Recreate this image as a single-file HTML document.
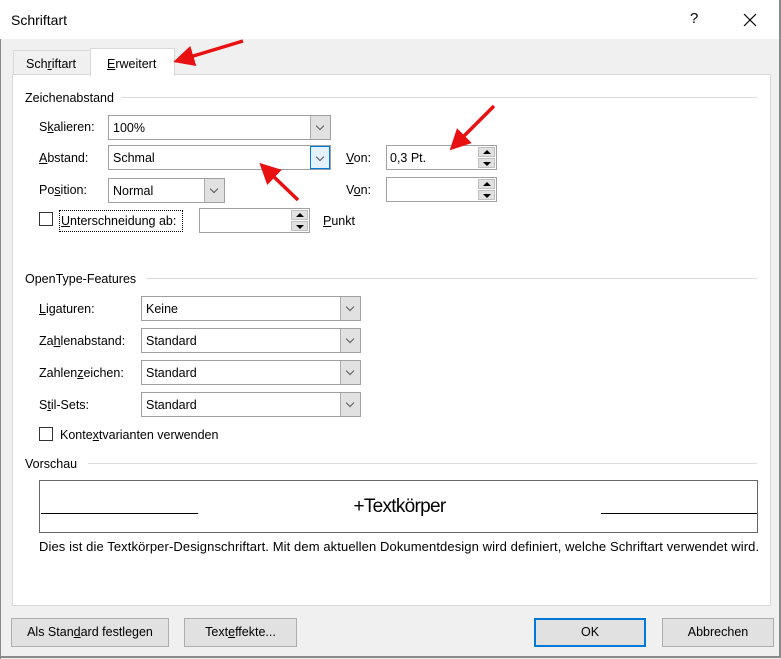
<!DOCTYPE html>
<html><head><meta charset="utf-8"><style>
*{box-sizing:border-box;margin:0;padding:0}
body{width:781px;height:658px;position:relative;background:#f0f0f0;font-family:"Liberation Sans",sans-serif;font-size:12.5px;color:#000;overflow:hidden}
.a{position:absolute}
.t{position:absolute;white-space:nowrap;line-height:14px}
.combo{position:absolute;background:#fff;border:1px solid #a0a0a0;height:25px}
.combo span{position:absolute;left:4px;top:5px}
.arr{position:absolute;right:0;top:0;bottom:0;width:20px;background:#e1e1e1;border-left:1px solid #adadad}
.arr:after{content:"";position:absolute;left:6px;top:7px;width:5px;height:5px;border-right:1px solid #555;border-bottom:1px solid #555;transform:rotate(45deg)}
.spin{position:absolute;background:#fff;border:1px solid #a0a0a0;height:25px}
.spin span{position:absolute;left:3px;top:5px}
.sb{position:absolute;right:1px;width:17px;height:10px;background:#e1e1e1;border:1px solid #c0c0c0}
.up{top:1px}.dn{bottom:1px}
.up:after{content:"";position:absolute;left:4px;top:2px;border:4px solid transparent;border-bottom:4px solid #000;border-top:0}
.dn:after{content:"";position:absolute;left:4px;top:3px;border:4px solid transparent;border-top:4px solid #000;border-bottom:0}
.cb{position:absolute;width:14px;height:14px;border:1px solid #333;background:#fff}
.line{position:absolute;height:1px;background:#dcdcdc}
.btn{position:absolute;top:618px;height:29px;background:#e1e1e1;border:1px solid #adadad;text-align:center;line-height:27px}
u{text-decoration:underline}
</style></head><body>
<div class="a" style="left:0;top:0;width:781px;height:39px;background:#fff"></div>
<div class="t" style="left:11px;top:13px;font-size:14px">Schriftart</div>
<div class="t" style="left:690px;top:12px;font-size:15px">?</div>
<svg class="a" style="left:743px;top:13px" width="14" height="14"><path d="M1 1L13 13M13 1L1 13" stroke="#000" stroke-width="1.2"/></svg>
<div class="a" style="right:0;top:0;width:2px;height:658px;background:#8a8a8a"></div>
<div class="a" style="left:0;bottom:0;width:781px;height:2px;background:#8a8a8a"></div>
<div class="a" style="left:0;top:39px;width:1px;height:620px;background:#8a8a8a"></div>
<!-- tabs -->
<div class="a" style="left:13px;top:50px;width:78px;height:25px;border:1px solid #d9d9d9;border-bottom:none;background:#f0f0f0"></div>
<div class="t" style="left:26px;top:57px">Sch<u>r</u>iftart</div>
<div class="a" style="left:12px;top:74px;width:759px;height:532px;background:#fff;border:1px solid #d9d9d9"></div>
<div class="a" style="left:90px;top:48px;width:85px;height:28px;background:#fff;border:1px solid #d9d9d9;border-bottom:none"></div>
<div class="t" style="left:107px;top:57px"><u>E</u>rweitert</div>
<!-- Zeichenabstand -->
<div class="t" style="left:25px;top:91px">Zeichenabstand</div>
<div class="line" style="left:121px;top:97px;width:636px"></div>
<div class="t" style="left:39px;top:120px">S<u>k</u>alieren:</div>
<div class="combo" style="left:108px;top:115px;width:223px"><span>100%</span><div class="arr"></div></div>
<div class="t" style="left:39px;top:151px"><u>A</u>bstand:</div>
<div class="combo" style="left:108px;top:145px;width:223px"><span>Schmal</span><div class="arr" style="background:#e5f1fb;border:1px solid #0078d7"></div></div>
<div class="t" style="left:346px;top:151px"><u>V</u>on:</div>
<div class="spin" style="left:386px;top:145px;width:111px"><span>0,3 Pt.</span><div class="sb up"></div><div class="sb dn"></div></div>
<div class="t" style="left:39px;top:183px">Po<u>s</u>ition:</div>
<div class="combo" style="left:108px;top:178px;width:117px"><span>Normal</span><div class="arr"></div></div>
<div class="t" style="left:346px;top:183px">V<u>o</u>n:</div>
<div class="spin" style="left:386px;top:177px;width:111px"><div class="sb up"></div><div class="sb dn"></div></div>
<div class="cb" style="left:39px;top:212px"></div>
<div class="a" style="left:59px;top:210px;width:124px;height:22px;border:1px dotted #000"></div>
<div class="t" style="left:61px;top:214px"><u>U</u>nterschneidung ab:</div>
<div class="spin" style="left:199px;top:208px;width:111px"><div class="sb up"></div><div class="sb dn"></div></div>
<div class="t" style="left:323px;top:214px"><u>P</u>unkt</div>
<!-- OpenType -->
<div class="t" style="left:25px;top:272px">OpenType-Features</div>
<div class="line" style="left:146px;top:278px;width:611px"></div>
<div class="t" style="left:39px;top:302px"><u>L</u>igaturen:</div>
<div class="combo" style="left:141px;top:296px;width:220px"><span>Keine</span><div class="arr"></div></div>
<div class="t" style="left:39px;top:334px">Za<u>h</u>lenabstand:</div>
<div class="combo" style="left:141px;top:328px;width:220px"><span>Standard</span><div class="arr"></div></div>
<div class="t" style="left:39px;top:366px">Zahlen<u>z</u>eichen:</div>
<div class="combo" style="left:141px;top:360px;width:220px"><span>Standard</span><div class="arr"></div></div>
<div class="t" style="left:39px;top:398px">S<u>t</u>il-Sets:</div>
<div class="combo" style="left:141px;top:392px;width:220px"><span>Standard</span><div class="arr"></div></div>
<div class="cb" style="left:39px;top:427px"></div>
<div class="t" style="left:60px;top:428px">Konte<u>x</u>tvarianten verwenden</div>
<!-- Vorschau -->
<div class="t" style="left:25px;top:457px">Vorschau</div>
<div class="line" style="left:88px;top:463px;width:669px"></div>
<div class="a" style="left:39px;top:480px;width:719px;height:53px;border:1px solid #666"></div>
<div class="a" style="left:41px;top:513px;width:157px;height:1px;background:#000"></div>
<div class="a" style="left:601px;top:513px;width:156px;height:1px;background:#000"></div>
<div class="t" style="left:0;width:799px;text-align:center;top:497px;font-size:19px;line-height:20px;letter-spacing:-0.7px">+Textkörper</div>
<div class="t" style="left:39px;top:540px;font-size:13px;letter-spacing:0.1px">Dies ist die Textkörper-Designschriftart. Mit dem aktuellen Dokumentdesign wird definiert, welche Schriftart verwendet wird.</div>
<!-- buttons -->
<div class="btn" style="left:11px;width:158px">Als Stan<u>d</u>ard festlegen</div>
<div class="btn" style="left:184px;width:113px">Text<u>e</u>ffekte...</div>
<div class="btn" style="left:534px;width:112px;border:2px solid #0078d7;line-height:25px">OK</div>
<div class="btn" style="left:662px;width:112px">Abbrechen</div>
<!-- red arrows -->
<svg class="a" style="left:0;top:0" width="781" height="658">
<defs><marker id="h" markerWidth="6" markerHeight="6" refX="1" refY="3" orient="auto"><path d="M0 0L6 3L0 6Z" fill="#e81010"/></marker></defs>
<g stroke="#e81010" stroke-width="3.5" fill="none">
<path d="M243 41L190 57" marker-end="url(#h)"/>
<path d="M298 200L272 175" marker-end="url(#h)"/>
<path d="M494 106L462 138" marker-end="url(#h)"/>
</g></svg>
</body></html>
